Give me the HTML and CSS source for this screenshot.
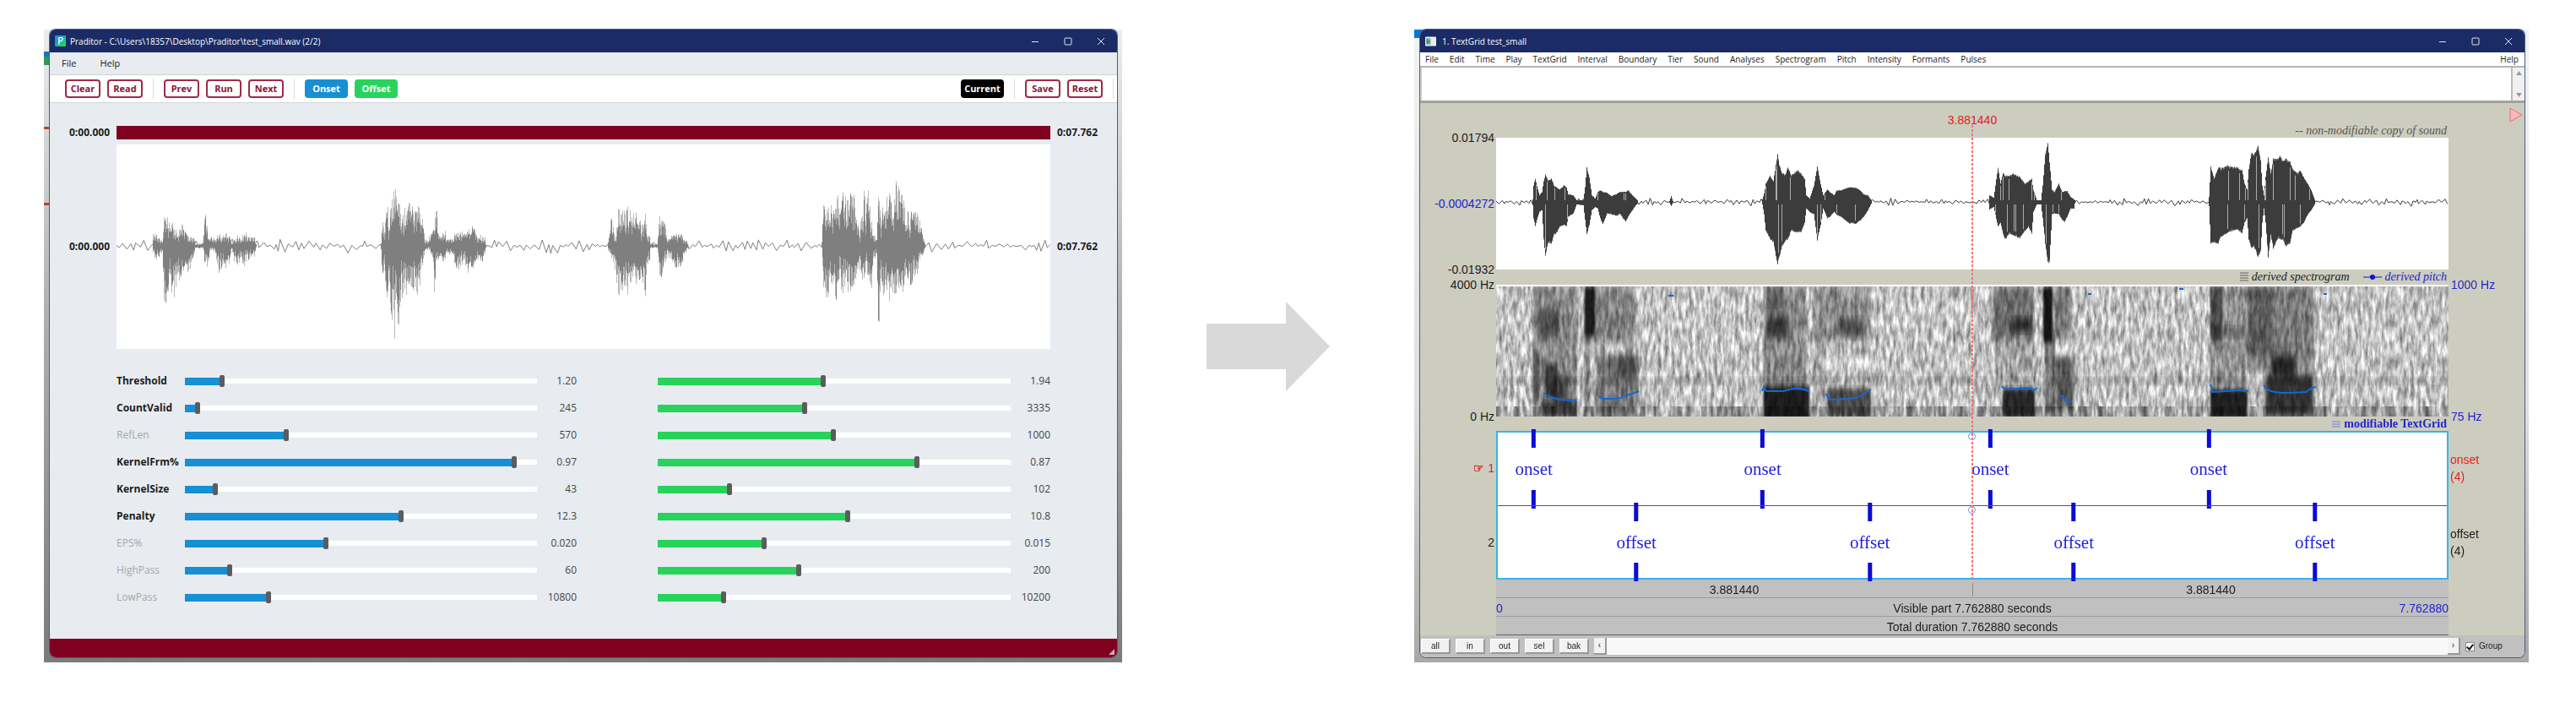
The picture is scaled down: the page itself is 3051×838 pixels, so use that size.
FILE: index.html
```html
<!DOCTYPE html>
<html lang="en">
<head>
<meta charset="utf-8">
<title>Praditor to TextGrid</title>
<link rel="stylesheet" href="styles.css">
</head>
<body>
<main class="stage">
  <section class="frame frame-praditor" aria-label="Praditor">
    <div class="window">
      <header class="titlebar">
        <svg class="logo" viewBox="0 0 14 14" aria-hidden="true"><defs><linearGradient id="lg" x1="0" y1="0" x2="1" y2="1"><stop offset=".3" stop-color="#1795d4"/><stop offset=".8" stop-color="#26d45e"/></linearGradient></defs><rect width="14" height="14" rx="1" fill="url(#lg)"/><path d="M5 11.500 5.500 4M4 4.500C6 2 10 2 9.800 4.800 9.500 7 7 7.500 5.500 7" fill="none" stroke="#fff" stroke-width="1.400"/></svg>
        <span class="title">Praditor - C:\Users\18357\Desktop\Praditor\test_small.wav (2/2)</span>
        <div class="winctl">
          <button aria-label="Minimize"><svg viewBox="0 0 10 10"><path d="M1 5.500h8"/></svg></button>
          <button aria-label="Maximize"><svg viewBox="0 0 10 10"><rect x="1" y="1" width="8" height="8" rx="1"/></svg></button>
          <button aria-label="Close"><svg viewBox="0 0 10 10"><path d="M1 1l8 8M9 1l-8 8"/></svg></button>
        </div>
      </header>
      <nav class="menu menu-wide"><button>File</button><button>Help</button></nav>
      <div class="toolbar">
        <button class="btn">Clear</button><button class="btn">Read</button>
        <i class="sep"></i>
        <button class="btn">Prev</button><button class="btn">Run</button><button class="btn">Next</button>
        <i class="sep"></i>
        <button class="btn solid blue">Onset</button><button class="btn solid green">Offset</button>
        <span class="grow"></span>
        <button class="btn solid black">Current</button>
        <i class="sep"></i>
        <button class="btn">Save</button><button class="btn">Reset</button>
        <i class="sep last"></i>
      </div>
      <div class="tracks">
        <span class="time">0:00.000</span><div class="range"></div><span class="time end">0:07.762</span>
        <span class="time">0:00.000</span><svg class="wave" id="wave-a" viewBox="0 0 1106 242" preserveAspectRatio="none"></svg><span class="time end">0:07.762</span>
      </div>
      <div class="params">
        <div class="col onset" id="onset-params"></div>
        <div class="col offset" id="offset-params"></div>
      </div>
      <footer class="status"><svg viewBox="0 0 8 8" aria-hidden="true"><path d="M8 0v8H0z" fill="#c9a9b0"/></svg></footer>
    </div>
  </section>

  <svg class="arrow" viewBox="0 0 146 106" aria-hidden="true"><path d="M0 26H94V0L146 53 94 106V80H0z" fill="#d9d9d9"/></svg>

  <section class="frame frame-textgrid" aria-label="TextGrid">
    <div class="window">
      <header class="titlebar">
        <svg class="logo doc" viewBox="0 0 14 12" aria-hidden="true"><rect width="14" height="12" rx="1" fill="#e9eeee"/><rect x="1" y="2" width="6" height="8" fill="#7fb8a4"/><path d="M3 3v6M5 5v3" stroke="#1c6b60"/></svg>
        <span class="title">1. TextGrid test_small</span>
        <div class="winctl">
          <button aria-label="Minimize"><svg viewBox="0 0 10 10"><path d="M1 5.500h8"/></svg></button>
          <button aria-label="Maximize"><svg viewBox="0 0 10 10"><rect x="1" y="1" width="8" height="8" rx="1"/></svg></button>
          <button aria-label="Close"><svg viewBox="0 0 10 10"><path d="M1 1l8 8M9 1l-8 8"/></svg></button>
        </div>
      </header>
      <nav class="menu menu-tight">
        <button>File</button><button>Edit</button><button>Time</button><button>Play</button><button>TextGrid</button><button>Interval</button><button>Boundary</button><button>Tier</button><button>Sound</button><button>Analyses</button><button>Spectrogram</button><button>Pitch</button><button>Intensity</button><button>Formants</button><button>Pulses</button><span class="grow"></span><button>Help</button>
      </nav>
      <div class="entry">
        <textarea aria-label="Interval text"></textarea>
        <div class="vscroll"><svg viewBox="0 0 8 6"><path d="M4 0l4 6H0z"/></svg><svg viewBox="0 0 8 6"><path d="M4 6l4-6H0z"/></svg></div>
      </div>
      <div class="editor">
        <div class="head"><span class="cursor-time">3.881440</span><span class="legend grey">-- non-modifiable copy of sound</span></div>
        <svg class="play" viewBox="0 0 16 18" aria-hidden="true"><path d="M1 1l14 8-14 8z" fill="#ffb9b9" stroke="#e07078"/></svg>
        <div class="axis axis-wave"><span>0.01794</span><span class="ink">-0.0004272</span><span>-0.01932</span></div>
        <svg class="wave" id="wave-b" viewBox="0 0 1128 156" preserveAspectRatio="none"></svg>
        <div class="legends">
          <span class="legend"><svg class="key" viewBox="0 0 10 12"><path d="M0 1h10M0 4h10M0 7h10M0 10h10" stroke="#666"/></svg>derived spectrogram</span>
          <span class="legend ink"><svg class="key line" viewBox="0 0 22 8"><path d="M0 4h22" stroke="#1010d8"/><circle cx="11" cy="4" r="3" fill="#1010d8"/></svg>derived pitch</span>
        </div>
        <div class="axis axis-spec"><span>4000 Hz</span><span>0 Hz</span></div>
        <svg class="spec" viewBox="0 0 1128 154" preserveAspectRatio="none" aria-label="Spectrogram">
          <defs>
            <filter id="grain" x="0" y="0" width="100%" height="100%" color-interpolation-filters="sRGB"><feTurbulence type="fractalNoise" baseFrequency=".24 .06" numOctaves="3" seed="8"/><feColorMatrix values=".85 0 0 0 .34  .85 0 0 0 .34  .85 0 0 0 .34  0 0 0 0 1"/></filter>
            <filter id="bars" x="0" y="0" width="100%" height="100%" color-interpolation-filters="sRGB"><feTurbulence type="fractalNoise" baseFrequency=".14 .001" numOctaves="2" seed="4"/><feColorMatrix values="0 0 0 0 .2  0 0 0 0 .2  0 0 0 0 .2  1.800 0 0 0 -.65"/></filter>
            <filter id="soft" x="-20%" y="-20%" width="140%" height="140%"><feGaussianBlur stdDeviation="2 5"/></filter>
            <filter id="edge" x="-10%" y="-10%" width="120%" height="120%"><feGaussianBlur stdDeviation="1 3"/></filter>
          </defs>
          <rect width="1128" height="154" filter="url(#grain)"/>
          <rect y="142" width="1128" height="12" filter="url(#bars)"/>
          <rect y="107" width="1128" height="10" opacity=".12" filter="url(#edge)"/>
          <g class="energy" id="energy"></g>
          <g class="pitch">
            <path d="M56 126Q62 130 65 131T75 134L95 135M122 130Q124 133 128 133H141Q150 132 155 129L169 124M204 11h6"/>
            <path d="M315 124l2-5 3 5H340L348 122Q358 119 371 124M391 127Q393 134 398 134L418 133Q428 132 433 129L444 122"/>
            <path d="M599 118l4 4L631 120l6 3 4-3M667 128L678 137l3-1M701 9h4M809 3h5M980 9h4"/>
            <path d="M846 116l3 9L878 123l13 1M909 117Q912 122 918 124T938 126L960 125Q964 120 971 119"/>
          </g>
        </svg>
        <div class="axis axis-right ink"><span>1000 Hz</span><span>75 Hz</span></div>
        <div class="legends low"><span class="legend ink strong"><svg class="key" viewBox="0 0 10 12"><path d="M0 3h10M0 6h10M0 9h10" stroke="#7a7ad8"/></svg>modifiable TextGrid</span></div>
        <div class="tier-names"><span class="red"><small>☞</small> 1</span><span>2</span></div>
        <div class="tiers">
          <div class="tier"><i class="knob"></i>
            <span class="point" style="left:3.800%">onset</span><span class="point" style="left:27.900%">onset</span><span class="point" style="left:51.900%">onset</span><span class="point" style="left:74.900%">onset</span></div>
          <div class="tier"><i class="knob"></i>
            <span class="point" style="left:14.600%">offset</span><span class="point" style="left:39.200%">offset</span><span class="point" style="left:60.700%">offset</span><span class="point" style="left:86.100%">offset</span></div>
        </div>
        <div class="tier-info"><span class="red">onset<br>(4)</span><span>offset<br>(4)</span></div>
        <i class="cursor"></i>
        <div class="bands">
          <div class="band halves"><span>3.881440</span><span>3.881440</span></div>
          <div class="band"><span class="ink">0</span><span>Visible part 7.762880 seconds</span><span class="ink right">7.762880</span></div>
          <div class="band"><span></span><span>Total duration 7.762880 seconds</span><span></span></div>
        </div>
      </div>
      <div class="bottombar">
        <button class="tool">all</button><button class="tool">in</button><button class="tool">out</button><button class="tool">sel</button><button class="tool">bak</button>
        <div class="hscroll"><button aria-label="Scroll left">‹</button><span class="grow"></span><button aria-label="Scroll right">›</button></div>
        <label class="group"><input type="checkbox" checked>Group</label>
      </div>
    </div>
  </section>
</main>
<script src="app.js"></script>
</body>
</html>
```
FILE: styles.css
```css
* { box-sizing: border-box; }
body { margin: 0; background: #fff; color: #1c1c1c; font-family: "Open Sans", "Noto Sans", sans-serif; font-size: 12px; line-height: 16px; }
button { margin: 0; padding: 0; border: 0; background: none; color: inherit; font: inherit; }
svg { display: block; }
.grow { flex: 1; }
.ink { color: #2222cc; }
.red { color: #e02020; }

.stage { display: grid; grid-template-columns: 1277fr 346fr 1320fr; padding: 35px 56px 0 52px; }
.arrow { width: 146px; height: 106px; align-self: center; justify-self: center; }

/* windows */
.frame { padding: 0 6px 6px 7px; background: linear-gradient(#ededed, #b0b0b0 45%, #7b7b7b); }
.frame-praditor { background: linear-gradient(#1c73b8, #1c73b8) 0 26px / 7px 6px no-repeat, linear-gradient(#2f9a52, #2f9a52) 0 32px / 7px 10px no-repeat, linear-gradient(#b3452f, #b3452f) 0 115px / 7px 3px no-repeat, linear-gradient(#b3452f, #b3452f) 0 205px / 7px 3px no-repeat, linear-gradient(#ededed, #b0b0b0 45%, #7b7b7b); }
.frame-textgrid { padding-right: 5px; background: linear-gradient(#0078d4, #0078d4) 0 0 / 12px 10px no-repeat, linear-gradient(#f2f2f2, #dedede 60%, #a8a8a8); }
.window { overflow: hidden; border-radius: 7px; background: #e8ecf1; box-shadow: 0 0 0 1px #4a5c8e; }
.titlebar { display: flex; align-items: center; height: 27px; padding-left: 6px; background: #1a2b66; color: #fff; font-size: 10px; }
.logo { width: 13px; height: 13px; margin-right: 5px; }
.logo.doc { height: 12px; margin-right: 7px; }
.winctl { display: flex; margin-left: auto; }
.winctl button { width: 39px; height: 27px; display: grid; place-items: center; }
.winctl svg { width: 10px; height: 10px; fill: none; stroke: #dfe3ee; }
.menu { display: flex; align-items: center; font-size: 11px; }
.menu-wide { height: 27px; padding-left: 14px; gap: 28px; border-bottom: 1px solid #cfd3d8; }
.menu-tight { height: 16px; padding: 0 7px 0 6px; gap: 13px; background: #fff; font-size: 10px; }

/* Praditor */
.toolbar { display: flex; align-items: center; gap: 8px; height: 33px; padding: 0 4px 0 18px; background: #fff; border-bottom: 1px solid #d3d6da; }
.btn { height: 22px; width: 42px; border: 2px solid #a12a48; border-radius: 4px; background: #fff; color: #8c1335; font-size: 11px; line-height: 16px; font-weight: 700; }
.btn.solid { width: 51px; color: #fff; }
.btn.blue { background: #168fd3; border-color: #168fd3; }
.btn.green { background: #27d35b; border-color: #27d35b; }
.btn.black { background: #000; border-color: #000; }
.sep { width: 1px; height: 24px; margin: 0 4px; background: #dcdcdc; }
.sep.last { margin: 0 0 0 4px; }
.tracks { display: grid; grid-template-columns: 79px 1fr 79px; row-gap: 6px; align-items: center; padding-top: 27px; font-weight: 700; }
.time { padding-right: 8px; text-align: right; }
.time.end { padding: 0 0 0 8px; text-align: left; }
.range { height: 16px; background: #7f001f; }
.wave { width: 100%; background: #fff; }
#wave-a { height: 242px; }
.params { display: flex; gap: 96px; padding: 22px 79px 33px; }
.onset { flex: 545; --fill: #168fd3; }
.offset { flex: 465; --fill: #27d35b; }
.param { display: grid; grid-template-columns: 1fr 47px; align-items: center; height: 32px; }
.onset .param { grid-template-columns: 81px 1fr 47px; }
.param label { font-weight: 700; }
.param.off label { font-weight: 400; color: #a3a6aa; }
.param output { text-align: right; color: #444; }
.param input { appearance: none; width: 100%; height: 14px; margin: 0; background: linear-gradient(var(--fill), var(--fill)) 0 50% / var(--p) 9px no-repeat, linear-gradient(#fff, #fff) 0 50% / 100% 6px no-repeat; }
.param input::-webkit-slider-thumb { appearance: none; width: 6px; height: 14px; border-radius: 2px; background: #5c5c5c; }
.status { display: flex; align-items: flex-end; justify-content: flex-end; height: 22px; padding: 3px; background: #7f001f; }
.status svg { width: 7px; height: 7px; }

/* TextGrid editor */
.entry { display: flex; height: 44px; border-top: 2px solid #b4b4b4; border-bottom: 3px solid #a2a299; background: #fff; }
.entry textarea { flex: 1; height: 100%; padding: 0; border: 0; border-left: 2px solid #ccc; resize: none; outline: 0; }
.vscroll { display: flex; flex-direction: column; justify-content: space-between; align-items: center; width: 16px; padding: 4px 0; border-left: 2px solid #bbb; background: #f0f0f0; }
.vscroll svg { width: 7px; height: 5px; fill: #999; }
.editor { display: grid; grid-template-columns: 90px 1fr 90px; grid-template-rows: 41px 156px 18px 156px 17px 176px 66px; background: #cdcdbf; font-family: "Liberation Sans", Arial, sans-serif; font-size: 14px; }
.head { grid-area: 1 / 2; display: grid; grid-template-columns: 1fr auto 1fr; }
.cursor-time { grid-column: 2; padding-top: 12px; color: #e02020; }
.legend { display: flex; align-items: center; gap: 4px; font: italic 14px/16px "Liberation Serif", "Times New Roman", serif; }
.legend.grey { align-self: end; justify-self: end; color: #555; padding-right: 2px; }
.legend.strong { font-style: normal; font-weight: 700; }
.legends { grid-area: 3 / 2; display: flex; justify-content: flex-end; align-items: center; gap: 16px; padding-right: 2px; }
.legends.low { grid-area: 5 / 2; }
.key { width: 10px; height: 12px; }
.key.line { width: 22px; height: 8px; }
.play { grid-area: 1 / 3; width: 16px; height: 18px; justify-self: end; margin: 5px 2px 0 0; }
.axis { display: flex; flex-direction: column; justify-content: space-between; margin: -8px 0; padding-right: 2px; text-align: right; }
.axis-wave { grid-area: 2 / 1; }
.axis-spec { grid-area: 4 / 1; }
.axis-right { grid-area: 4 / 3; padding: 0 0 0 3px; text-align: left; }
#wave-b { grid-area: 2 / 2; height: 156px; }
.spec { grid-area: 4 / 2; width: 100%; height: 156px; border-top: 2px solid #fff; }
.energy { mix-blend-mode: multiply; }
.pitch { fill: none; stroke: #1268d6; stroke-width: 2; }
.tier-names { grid-area: 6 / 1; display: grid; grid-template-rows: 1fr 1fr; align-items: center; text-align: right; padding-right: 2px; }
.tier-names small { font-size: 14px; font-weight: 700; }
.tiers { grid-area: 6 / 2; display: grid; grid-template-rows: 1fr 1fr; border: 2px solid #35b4ec; background: #fff; }
.tier { position: relative; }
.tier + .tier { border-top: 1px solid #555; }
.point { position: absolute; top: -4px; bottom: -4px; display: flex; flex-direction: column; justify-content: space-between; align-items: center; transform: translateX(-50%); color: #2222dd; font: 21px/24px "Liberation Serif", "Times New Roman", serif; }
.point::before, .point::after { content: ""; width: 5px; height: 22px; background: #0b0bd6; }
.knob { position: absolute; left: 50%; top: 0; width: 9px; height: 9px; margin-left: -5px; border: 1px solid #8585e6; border-radius: 50%; }
.tier-info { grid-area: 6 / 3; display: grid; grid-template-rows: 1fr 1fr; align-items: center; padding-left: 2px; line-height: 20px; }
.cursor { grid-area: 1 / 2 / 7 / 3; justify-self: center; z-index: 1; width: 2px; margin-top: 26px; background: repeating-linear-gradient(#f07474 0 3px, transparent 3px 5px); }
.bands { grid-area: 7 / 2; display: grid; grid-template-rows: repeat(3, 22px); }
.band { display: grid; grid-template-columns: 1fr auto 1fr; align-items: center; padding-top: 3px; background: #c0c0c0; border-bottom: 1px solid #9c9c9c; }
.band:last-child { border-color: #606060; }
.halves { grid-template-columns: 1fr 1fr; text-align: center; }
.halves span + span { border-left: 1px solid #888; }
.right { text-align: right; }
.bottombar { display: flex; align-items: center; gap: 6px; height: 26px; padding: 0 0 0 1px; background: #c0c0c0; font: 10px/12px "Liberation Sans", Arial, sans-serif; }
.tool { width: 35px; height: 18px; background: #f2f2f2; border: 1px solid #fff; border-right: 2px solid #999; border-bottom: 2px solid #999; }
.hscroll { flex: 1; display: flex; height: 20px; background: #f8f8f8; }
.hscroll button { width: 15px; background: #f2f2f2; border-right: 2px solid #999; border-bottom: 2px solid #999; }
.group { display: flex; align-items: center; gap: 5px; width: 70px; }
.group input { appearance: none; display: grid; place-items: center; width: 11px; height: 11px; margin: 0; background: #fff; border: 1px solid #888; }
.group input:checked::before { content: ""; width: 3px; height: 6px; margin-bottom: 2px; border: solid #111; border-width: 0 2px 2px 0; transform: rotate(40deg); }
```
FILE: app.js
```js
const onset = [
  ["Threshold", "1.20", 9.9], ["CountValid", "245", 3], ["RefLen", "570", 28.4, true],
  ["KernelFrm%", "0.97", 94.2], ["KernelSize", "43", 8.1], ["Penalty", "12.3", 61.5],
  ["EPS%", "0.020", 39.8, true], ["HighPass", "60", 12.1, true], ["LowPass", "10800", 23.3, true]
];
const offset = [["1.94", 46.8], ["3335", 41.5], ["1000", 49.8], ["0.87", 73.8], ["102", 20], ["10.8", 54], ["0.015", 29.9], ["200", 39.8], ["10200", 18.2]];
const slider = (id, p, label) =>
  `<input type="range" id="${id}" min="0" max="100" step="0.1" value="${p}" style="--p:${p}%"${label ? ` aria-label="${label}"` : ""}>`;
document.getElementById("onset-params").innerHTML = onset.map(([n, v, p, off], i) =>
  `<div class="param${off ? " off" : ""}"><label for="on${i}">${n}</label>${slider("on" + i, p)}<output for="on${i}">${v}</output></div>`).join("");
document.getElementById("offset-params").innerHTML = offset.map(([v, p], i) =>
  `<div class="param">${slider("off" + i, p, onset[i][0] + " offset")}<output for="off${i}">${v}</output></div>`).join("");

let seed = 7;
const rnd = () => (seed = (seed * 16807) % 2147483647) / 2147483647;

// Envelopes: x, height above and depth below the centre line
const envA = "43 17 10,46 14 20,49 10 15,54 8 10,57 42 85,59 35 60,63 22 38,66 32 60,69 22 55,72 10 30,74 20 50,77 25 30,80 18 28,84 13 33,88 11 22,91 10 15,93 2 3,102 3 3,104 38 22,106 44 25,108 10 20,112 15 5,116 8 6,122 15 34,125 10 22,129 16 27,133 12 20,136 3 4,140 10 25,145 13 20,150 12 28,154 17 20,159 10 12,163 10 12,165 3 3;313 5 8,315 34 42,318 34 50,321 44 60,323 35 62,326 56 80,329 71 102,331 60 80,334 50 86,337 35 60,341 45 60,344 48 55,348 50 52,351 52 50,354 48 52,356 52 55,360 40 40,363 25 20,365 5 5,371 12 5,375 18 20,376 22 70,378 48 15,381 20 20,384 8 10,388 22 27,391 8 10,397 8 10,402 18 24,406 17 28,411 15 18,415 20 30,420 22 28,424 21 25,429 15 22,433 12 18,436 10 12,437 3 3;582 6 5,586 38 15,589 15 20,591 12 35,594 42 55,597 44 50,601 42 48,606 48 58,609 38 45,613 35 40,615 38 42,619 28 38,623 30 50,626 40 58,628 15 25,631 10 20,632 3 3,640 3 3,642 35 25,645 30 50,649 30 20,652 10 12,658 12 18,662 13 28,665 14 30,669 14 20,673 6 10,676 3 3;835 10 5,837 46 45,841 40 68,846 50 60,853 62 60,857 64 55,862 55 50,867 60 50,873 55 52,877 30 30,880 15 25,884 64 40,888 50 25,891 72 50,893 30 72,897 15 15,900 12 15,902 55 96,905 45 60,908 40 60,911 75 65,915 65 62,919 35 60,923 74 60,927 65 55,931 60 55,935 35 50,939 40 45,943 45 40,947 38 38,952 25 18,955 10 10,957 4 3";
const envB = "43 3 3,44 20 20,46 28 29,49 15 18,51 8 12,54 12 10,56 25 45,58 33 66,61 26 50,65 28 50,68 20 40,71 18 38,75 15 30,80 20 28,83 18 30,85 9 18,91 8 14,95 2 3,103 2 4,105 18 22,107 42 39,110 30 28,113 8 10,117 4 6,120 12 8,123 14 20,126 12 27,131 11 14,136 7 15,143 10 17,146 12 14,153 12 24,156 14 18,161 8 10,165 4 4,167 2 2;205 1 1,207 7 5,209 1 1;315 3 3,317 10 15,319 22 35,324 32 45,328 25 48,331 45 65,333 57 76,335 45 66,338 35 55,342 33 48,345 42 45,349 32 35,353 35 36,357 38 37,361 34 36,365 28 25,367 8 8,371 4 12,376 20 15,380 43 46,384 22 28,387 8 8,392 15 20,395 12 18,400 8 12,403 14 16,408 14 18,418 18 26,426 17 26,431 14 22,435 9 18,440 8 10,444 2 2;584 8 9,589 5 6,594 42 30,597 22 25,600 35 38,602 32 45,608 32 38,612 34 40,620 30 44,626 22 35,630 25 30,634 28 38,636 14 12,640 2 3,645 2 3,647 20 20,650 58 50,653 71 73,655 48 72,658 15 15,661 12 14,666 22 15,670 12 22,673 13 24,676 13 18,680 6 8,684 3 8,685 2 2;844 6 5,846 42 50,850 28 50,855 42 50,858 40 42,865 44 38,871 42 35,877 42 33,883 38 38,886 22 25,889 15 20,891 40 45,894 60 56,897 56 54,902 68 66,905 50 60,907 20 25,909 8 8,911 30 25,914 55 67,917 35 40,920 52 56,925 52 45,928 56 45,931 50 45,935 52 54,940 48 50,943 40 35,948 35 32,952 38 30,956 30 25,961 22 15,965 14 10,969 3 3";

function drawWave(id, text, width, mid, opts) {
  const bursts = text.split(";").map(b => b.split(",").map(p => p.split(" ").map(Number)));
  let pale = "", dark = "", slits = "", line = `M0 ${mid}`;
  for (let x = 0, n = 0; x < width; n++) {
    const a = opts.noise * (0.1 + rnd() * rnd() * 2.4);
    line += `L${x.toFixed(1)} ${(mid + (n % 2 ? a : -a)).toFixed(1)}`;
    x += opts.wobble * (.5 + rnd());
  }
  for (const b of bursts) {
    for (let x = b[0][0], i = 0; x <= b[b.length - 1][0]; x++) {
      while (i < b.length - 2 && x > b[i + 1][0]) i++;
      const [x0, u0, d0] = b[i], [x1, u1, d1] = b[i + 1], t = Math.min(1, (x - x0) / (x1 - x0));
      const u = u0 + (u1 - u0) * t, d = d0 + (d1 - d0) * t;
      const gap = opts.rough > .5 && rnd() < .25 ? .65 : 1;
      const ju = gap * (1 - opts.rough * rnd() * 0.5) * opts.gain, jd = gap * (1 - opts.rough * rnd() * 0.5) * opts.gain;
      pale += `M${x + .5} ${(mid - u * ju).toFixed(1)}V${(mid + d * jd).toFixed(1)}`;
      const ku = ju * (1 - opts.rough * rnd() * .8), kd = jd * (1 - opts.rough * rnd() * .8);
      dark += `M${x + .5} ${(mid - u * ku).toFixed(1)}V${(mid + d * kd).toFixed(1)}`;
      if (opts.slits && u > 10 && rnd() < .12) slits += rnd() < .5 ? `M${x + .5} ${mid - 2}V${mid - u * .85}` : `M${x + .5} ${mid + 3}V${mid + d * .85}`;
    }
  }
  document.getElementById(id).innerHTML =
    `<path d="${line}" fill="none" stroke="${opts.color}"/><path d="${pale}" stroke="${opts.pale}"/><path d="${dark}" stroke="${opts.color}" stroke-width="1.1"/><path d="${slits}" stroke="#aaa"/>`;
}
drawWave("wave-a", envA, 1106, 120, { noise: 4, wobble: 4, rough: .75, gain: 1.1, color: "#7f7f7f", pale: "#b9b9b9" });
drawWave("wave-b", envB, 1128, 76, { noise: 2.2, wobble: 3, rough: .08, gain: 1, color: "#3c3c3c", pale: "#777", slits: true });

// Speech energy: x, y, width, height, opacity
const energy = [
  [44, 0, 52, 154, .3], [50, 28, 25, 32, .45], [44, 75, 7, 60, .4], [58, 92, 14, 40, .6], [68, 106, 18, 32, .5], [56, 135, 40, 19, .55],
  [105, 0, 12, 58, .8], [105, 0, 60, 66, .35], [105, 60, 6, 90, .35], [118, 80, 50, 74, .4], [143, 82, 24, 26, .4],
  [317, 0, 50, 154, .3], [320, 35, 26, 26, .6], [322, 0, 18, 30, .35], [317, 118, 54, 40, .8],
  [376, 0, 66, 64, .28], [404, 38, 33, 22, .45], [376, 60, 12, 90, .15], [392, 120, 52, 36, .62],
  [588, 0, 48, 64, .45], [608, 38, 28, 16, .6], [590, 64, 48, 50, .15], [600, 120, 38, 36, .8],
  [648, 0, 11, 66, .9], [650, 60, 12, 90, .4], [660, 0, 20, 62, .4], [662, 84, 22, 62, .55],
  [846, 0, 42, 154, .25], [846, 0, 14, 66, .5], [846, 48, 40, 12, .35], [846, 122, 44, 34, .8],
  [889, 0, 79, 100, .38], [889, 0, 30, 80, .25], [911, 104, 57, 50, .75], [918, 82, 28, 26, .75]
];
document.getElementById("energy").innerHTML = energy.map(([x, y, w, h, o]) =>
  `<rect x="${x}" y="${y}" width="${w}" height="${h}" opacity="${o}" filter="url(#${w < 15 || h > 100 || y > 117 ? "edge" : "soft"})"/>`).join("");
```
